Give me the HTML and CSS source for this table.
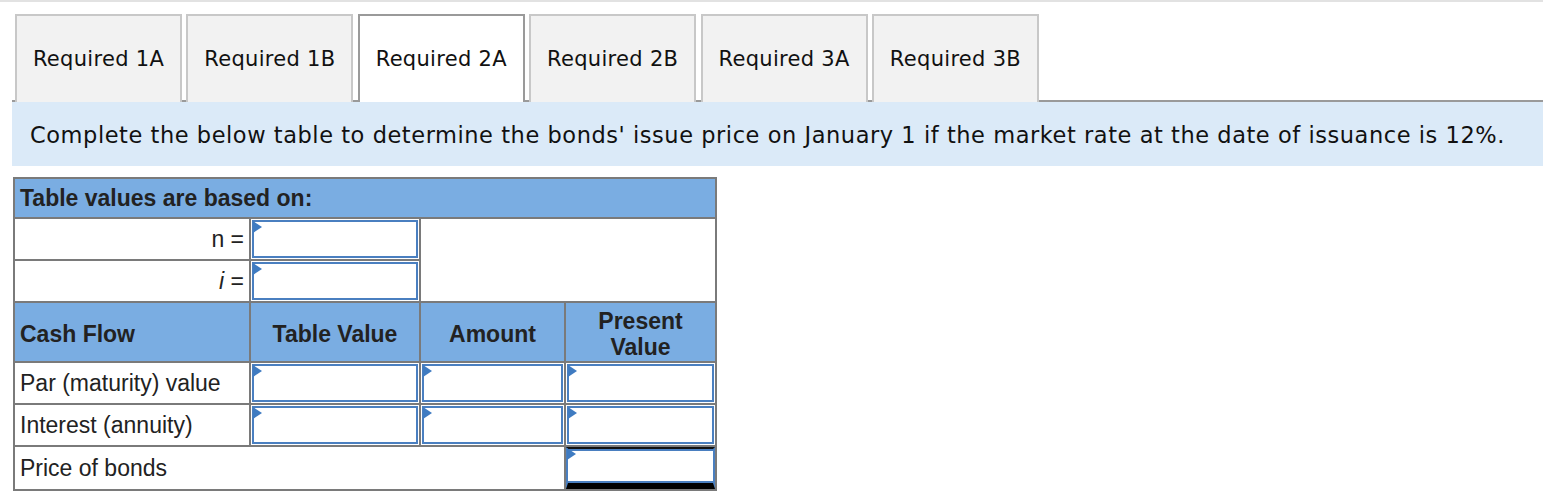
FILE: index.html
```html
<!DOCTYPE html>
<html>
<head>
<meta charset="utf-8">
<link rel="stylesheet" href="styles.css">
</head>
<body>
<div class="topline"></div>
<div class="wrap">
  <div class="tabs">
    <div class="tab">Required 1A</div>
    <div class="tab">Required 1B</div>
    <div class="tab active">Required 2A</div>
    <div class="tab">Required 2B</div>
    <div class="tab">Required 3A</div>
    <div class="tab">Required 3B</div>
  </div>
  <div class="banner">Complete the below table to determine the bonds' issue price on January 1 if the market rate at the date of issuance is 12%.</div>
  <table class="bt">
    <colgroup>
      <col class="c1"><col class="c2"><col class="c3"><col class="c4">
    </colgroup>
    <tr class="r-head"><th colspan="4" class="left">Table values are based on:</th></tr>
    <tr class="r-row"><td class="right">n =</td><td class="inp"><div class="box"></div></td><td colspan="2" rowspan="2" class="blank"></td></tr>
    <tr class="r-row"><td class="right"><i>i</i> =</td><td class="inp"><div class="box"></div></td></tr>
    <tr class="r-colhead"><th class="left">Cash Flow</th><th>Table Value</th><th>Amount</th><th>Present<br>Value</th></tr>
    <tr class="r-row"><td>Par (maturity) value</td><td class="inp"><div class="box"></div></td><td class="inp"><div class="box"></div></td><td class="inp"><div class="box"></div></td></tr>
    <tr class="r-row"><td>Interest (annuity)</td><td class="inp"><div class="box"></div></td><td class="inp"><div class="box"></div></td><td class="inp"><div class="box"></div></td></tr>
    <tr class="r-row"><td colspan="3">Price of bonds</td><td class="inp total"><div class="box"></div></td></tr>
  </table>
</div>
</body>
</html>
```
FILE: styles.css
```css
html, body {
  margin: 0;
  padding: 0;
  background: #fff;
}
.topline {
  width: 1543px;
  height: 2px;
  background: #e2e2e2;
}
.wrap {
  padding: 12px 0 0 12px;
  width: 1531px;
}
.tabs {
  display: flex;
  gap: 4.4px;
  padding-left: 3px;
  border-bottom: 2px solid #9a9a9a;
  height: 86px;
}
.tab {
  box-sizing: border-box;
  width: 167px;
  height: 88px;
  background: #f2f2f2;
  border: 2px solid #c8c8c8;
  border-bottom: none;
  font-family: "DejaVu Sans", Verdana, sans-serif;
  font-size: 21px;
  letter-spacing: 0.3px;
  color: #111;
  display: flex;
  align-items: center;
  justify-content: center;
  padding-bottom: 0;
}
.tab.active {
  background: #fff;
  border-color: #9a9a9a;
  margin-bottom: -2px;
}
.banner {
  height: 64px;
  background: #dbeaf8;
  font-family: "DejaVu Sans", Verdana, sans-serif;
  font-size: 22.5px;
  letter-spacing: 0.55px;
  color: #111;
  display: flex;
  align-items: center;
  padding-left: 18px;
  padding-top: 2px;
  box-sizing: border-box;
}
.bt {
  margin-top: 11px;
  margin-left: 1px;
  border-collapse: collapse;
  font-family: "Liberation Sans", Arial, sans-serif;
  font-size: 23px;
  color: #222;
  table-layout: fixed;
  width: 702px;
}
.c1 { width: 236px; }
.c2 { width: 170px; }
.c3 { width: 145px; }
.c4 { width: 151px; }
.bt th, .bt td {
  border: 2px solid #7a7a7a;
  padding: 0 5px;
  box-sizing: border-box;
  white-space: nowrap;
}
.bt th {
  background: #7aade2;
  font-weight: bold;
  text-align: center;
  line-height: 26px;
}
.bt th.left { text-align: left; }
.bt td.right { text-align: right; }
.r-head th { height: 40px; }
.r-row td { height: 42px; }
.r-colhead th { height: 60px; padding-top: 3px; }
.bt td.blank { background: #fff; }
.bt td.inp {
  padding: 1px;
}
.box {
  box-sizing: border-box;
  height: 38px;
  border: 2px solid #4a7fc0;
  background: #fff;
  position: relative;
}
.box::before {
  content: "";
  position: absolute;
  left: -1px;
  top: -1px;
  border-top: 6px solid transparent;
  border-bottom: 6px solid transparent;
  border-left: 9px solid #3f7bc1;
}
.bt td.total {
  border-bottom: 2px solid #7a7a7a;
  padding: 0;
}
.total .box {
  height: 42px;
  border-top: 2px solid #111;
  border-bottom: 6px solid #000;
  box-shadow: inset 0 2px 0 #4a7fc0, inset 0 -2px 0 #4a7fc0;
}
```
